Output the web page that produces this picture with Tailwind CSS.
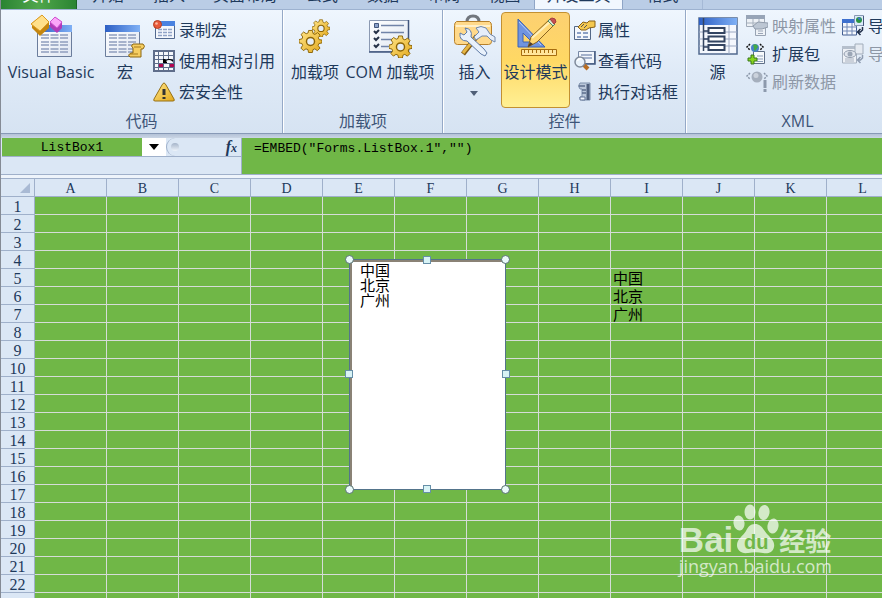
<!DOCTYPE html>
<html lang="zh-CN">
<head>
<meta charset="utf-8">
<meta name="viewport" content="width=device-width, initial-scale=1">
<title>ListBox1</title>
<script src="https://cdn.jsdelivr.net/npm/@tailwindcss/browser@4"></script>
</head>
<body class="flex h-screen flex-col overflow-hidden border-l border-[#858b95] bg-[#dbe7f5] font-['Open_Sans','Noto_Sans_CJK_SC',sans-serif] text-base text-[#1e395b]">

<svg width="0" height="0" class="absolute" aria-hidden="true">
  <defs>
    <linearGradient id="gold" x1="0" y1="0" x2="1" y2="1"><stop offset="0" stop-color="#ffe58a"/><stop offset="1" stop-color="#e3a91c"/></linearGradient>
    <linearGradient id="blue" x1="0" y1="0" x2="1" y2="0"><stop offset="0" stop-color="#2d5fc4"/><stop offset="1" stop-color="#7fb0f5"/></linearGradient>
    <linearGradient id="page" x1="0" y1="0" x2="1" y2="1"><stop offset="0" stop-color="#fff"/><stop offset="1" stop-color="#dfe6f2"/></linearGradient>
    <symbol id="gear" viewBox="0 0 24 24">
      <path d="M10 1h4l.6 3.2 2 .9 2.8-1.9 2.6 2.700-1.800 2.700.8 2L24 11v3l-3.200.7-.8 2 1.900 2.700-2.700 2.700-2.700-1.900-2 .9L14 24h-4l-.7-3-2-.8-2.700 1.800-2.600-2.600 1.800-2.800-.8-2L0 14v-3.500l3.100-.700.8-2L2.200 5.200l2.600-2.600 2.700 1.800 2-.8z" fill="url(#gold)" stroke="#8c6508"/>
      <circle cx="12" cy="12.500" r="4.200" fill="#e4edf8" stroke="#8c6508" stroke-width="1.500"/>
    </symbol>
    <symbol id="sheet" viewBox="0 0 35 32">
      <path d="M.5.5h34v31H.5z" fill="url(#page)" stroke="#6b7d9c"/>
      <path d="M0 0h35v7H0z" fill="url(#blue)"/>
      <path d="M4 10h27M4 13h27M4 17h27M4 20h27M4 24h27M4 27h27" stroke="#8f9dbd" stroke-width="1.500" stroke-dasharray="8 1.500"/>
    </symbol>
  </defs>
</svg>

<nav aria-label="功能区选项卡" class="flex h-[9px] shrink-0 items-end overflow-hidden bg-[#bacde6]">
  <a href="#" class="flex h-[9px] w-[76px] shrink-0 items-end justify-center border-r border-[#1b6527] bg-linear-to-r from-[#2a8432] via-[#4fa64b] to-[#2a8432] pb-1 leading-5 text-white">文件</a>
  <a href="#" class="w-[62px] shrink-0 pb-1 text-center leading-5">开始</a>
  <a href="#" class="w-[60px] shrink-0 pb-1 text-center leading-5">插入</a>
  <a href="#" class="w-[92px] shrink-0 pb-1 text-center leading-5">页面布局</a>
  <a href="#" class="w-[62px] shrink-0 pb-1 text-center leading-5">公式</a>
  <a href="#" class="w-[60px] shrink-0 pb-1 text-center leading-5">数据</a>
  <a href="#" class="w-[62px] shrink-0 pb-1 text-center leading-5">审阅</a>
  <a href="#" class="w-[59px] shrink-0 pb-1 text-center leading-5">视图</a>
  <a href="#" aria-current="page" class="flex h-[9px] w-[89px] shrink-0 items-end justify-center border-x border-[#8fa5c6] bg-[#f1f7fe] pb-1 leading-5">开发工具</a>
  <a href="#" class="flex h-[9px] w-[80px] shrink-0 items-end justify-center border-r border-[#a5b9d6] pb-1 leading-5">格式</a>
</nav>

<main class="flex min-h-0 flex-1 flex-col">
<div class="flex h-[125px] shrink-0 overflow-hidden border-t border-b border-t-[#9db2d0] border-b-[#8799b6] bg-linear-to-b from-[#eff6fe] via-[#dfeaf7] to-[#d6e3f2] whitespace-nowrap">

  <section class="flex w-[282px] shrink-0 flex-col border-r border-[#95a9c7]">
    <div class="flex flex-1 items-start gap-1 pt-1 pl-1">
      <button class="flex w-[92px] flex-col items-center">
        <svg width="44" height="46" viewBox="0 0 44 46"><use href="#sheet" x="8" y="11" width="35" height="32"/><path d="m13 1 7 7v6l-9 8-8-8V9z" fill="#c4860f"/><path d="M13 1 20 8l-9 9-9-7z" fill="#ffe08a" stroke="#dc9b20"/><path d="m26 3 7 5v6l-5 5-7-6V8z" fill="#b03cb8"/><path d="m26 3 7 5-5 6-7-6z" fill="#fba6f8" stroke="#d052d0"/></svg>
        <span class="leading-6">Visual Basic</span>
      </button>
      <button class="flex w-[48px] flex-col items-center">
        <svg width="40" height="46" viewBox="0 0 40 46"><use href="#sheet" x="0" y="11" width="35" height="32"/><path d="M28 30h10q3 2 0 5h-2v8H25q-3-2 1-4h2v-5q-3-2 0-4z" fill="#f6ce62" stroke="#8b6613"/><path d="M29 33h7M25 40h8" stroke="#a77b1b"/></svg>
        <span class="leading-6">宏</span>
      </button>
      <div class="flex flex-col">
        <button class="flex h-[31px] items-center gap-1"><svg width="22" height="22" viewBox="0 0 22 22"><path d="M2.500 2.500h19v17h-19z" fill="#f4f7fc" stroke="#52698f"/><path d="M2 2h20v5H2z" fill="#4a82e0"/><path d="M5 10.500h14M5 13.500h14M5 16.500h14" stroke="#91a3c7" stroke-dasharray="4 1" stroke-width="1.500"/><circle cx="4.500" cy="5.500" r="4" fill="#e8593a" stroke="#b33c20"/><circle cx="3.500" cy="4.500" r="1.300" fill="#ffb9a0"/></svg>录制宏</button>
        <button class="flex h-[31px] items-center gap-1"><svg width="22" height="22" viewBox="0 0 22 22"><path d="M0 0h22v22H0z" fill="#5f6d8a"/><path d="M2 2h3v3H2zM6 2h4v3H6zM11 2h4v3h-4zM16 2h4v3h-4zM2 6h3v3H2zM6 6h4v3H6zM11 6h4v3h-4zM16 6h4v3h-4zM2 10h3v3H2zM6 10h14v3H6zM2 14h3v3H2zM11 14h5v3h-5zM2 18h3v2H2zM6 18h4v2H6zM11 18h4v2h-4zM16 18h4v2h-4z" fill="#f5f7fb"/><path d="M6 14h4v3H6zM17 14h4v3h-4z" fill="#b20750"/><path d="M10 9v4h4v-1l-1-1q3-2 6 0l1 1v-2q-4-2-7 0l-1-1z"/></svg>使用相对引用</button>
        <button class="flex h-[31px] items-center gap-1"><svg width="22" height="22" viewBox="0 0 22 22"><path d="M11 2q1 0 2 2l8 14q1 2-1 2H2q-2 0-1-2L9 4q1-2 2-2z" fill="url(#gold)" stroke="#967015"/><path d="M9.500 8h3v6h-3zM9.500 16h3v2h-3z" fill="#333"/></svg>宏安全性</button>
      </div>
    </div>
    <h2 class="h-6 text-center leading-6 text-[#3e5578]">代码</h2>
  </section>

  <section class="flex w-[160px] shrink-0 flex-col border-r border-l border-l-white border-r-[#95a9c7]">
    <div class="flex flex-1 items-start pt-1 pl-1">
      <button class="flex w-[54px] flex-col items-center">
        <svg width="32" height="46" viewBox="0 0 32 46"><use href="#gear" x="13" y="5" width="18" height="18"/><use href="#gear" x="0" y="15" width="23" height="24"/></svg>
        <span class="leading-6">加载项</span>
      </button>
      <button class="flex w-[96px] flex-col items-center">
        <svg width="44" height="46" viewBox="0 0 44 46"><path d="M1.500 6.500h39v31h-39z" fill="url(#page)" stroke="#8b99b2"/><path d="M40.500 6v32H1" stroke="#40557d" stroke-width="1.500" fill="none"/><path d="M13 11.500h23M13 18.500h23M13 25.500h11M13 32.500h9" stroke="#7183a8" stroke-width="1.500"/><path d="M6.500 9.500h4v4h-4z" fill="#8da2ca" stroke="#44577b"/><path d="m6 17 2 2 3-3M6 24l2 2 3-3M6 31l2 2 3-3" fill="none" stroke="#263147" stroke-width="2"/><use href="#gear" x="21" y="21" width="23" height="23"/></svg>
        <span class="leading-6">COM 加载项</span>
      </button>
    </div>
    <h2 class="h-6 text-center leading-6 text-[#3e5578]">加载项</h2>
  </section>

  <section class="flex w-[243px] shrink-0 flex-col border-r border-l border-l-white border-r-[#95a9c7]">
    <div class="flex flex-1 items-start pl-1">
      <button class="flex w-[53px] flex-col items-center pt-1">
        <svg width="44" height="46" viewBox="0 0 44 46"><path d="M14 8q0-6 6-6t6 6" fill="none" stroke="#71767e" stroke-width="3"/><path d="M3.500 7.500h33q2 1 2 4v16q0 3-3 3h-31q-3 0-3-3v-16q0-3 2-4z" fill="#ffd98b" stroke="#b7802a"/><path d="M3 12h34" stroke="#fff0ca" stroke-width="2"/><path d="m24 22-14 18" stroke="#805914" stroke-width="5"/><path d="m24 22-14 17" stroke="#e6b644" stroke-width="3"/><path d="M23 14q5-3 10 0l4 6 5 3v5l-4-2-4-4-5 0-6 4-2-3 5-5z" fill="#e6eefa" stroke="#7088ac"/><path d="m12 14 2 4-3 3-4-2q-1 8 7 8l14 13 4 2 2-3-3-4-13-12q2-8-6-9z" fill="#e9f1fb" stroke="#5f7ba6"/></svg>
        <span class="leading-6">插入</span>
        <svg class="mt-1" width="9" height="10" viewBox="0 0 9 10"><path d="M0 3h8L4 8z" fill="#4f5f77"/></svg>
      </button>
      <button aria-pressed="true" class="mt-0.5 flex h-[96px] w-[69px] flex-col items-center rounded-sm border border-[#c29032] bg-linear-to-b from-[#fcd071] via-[#ffd864] to-[#fff093] pt-px">
        <svg width="44" height="46" viewBox="0 0 44 46"><path d="M4 5v28h27zm5 14v9h9z" fill="#7094df" fill-rule="evenodd" stroke="#3b62b5"/><path d="m5 8 22 23" stroke="#b6cdfa"/><path d="M7.500 35.500h35v6h-35z" fill="#ffe59b" stroke="#a66c0f"/><path d="M10.500 36v3M14.500 36v3M18.500 36v3M22.500 36v3M26.500 36v3M30.500 36v3M34.500 36v3M38.500 36v3" stroke="#a66c0f"/><path d="m14 33 3-10L36 5l5 5-18 18z" fill="#ffd875" stroke="#8a641e"/><path d="m18 24 19-17" stroke="#fff0b9" stroke-width="2"/><path d="m34 7 2-2 5 5-2 2z" fill="#d8e6cf" stroke="#4c8c67"/><path d="m36 5 2-1q4 0 4 4l-2 2z" fill="#c94f50" stroke="#a33e40"/><path d="m14 33 2-5 3 2z" fill="#493b31"/></svg>
        <span class="leading-6">设计模式</span>
      </button>
      <div class="flex flex-col pt-1 pl-1">
        <button class="flex h-[31px] items-center gap-0.5"><svg width="22" height="22" viewBox="0 0 22 22"><path d="M.500 7.500h16v13H.500z" fill="#f4f7fc" stroke="#536887"/><path d="M3 13h4v2H3zM3 17h4v2H3zM9 13h5v2H9zM9 17h5v2H9z" fill="#8ba0c6"/><path d="m4 8 5-5 4 1 2-2h6v6l-6 1-3 2H7z" fill="#f4c84e" stroke="#876018"/><path d="m7 8 3-3M10 9l3-3" stroke="#555"/></svg>属性</button>
        <button class="flex h-[31px] items-center gap-0.5"><svg width="22" height="22" viewBox="0 0 22 22"><path d="M4.500 1.500h16v12h-16z" fill="#f2f6fc" stroke="#7788a5"/><path d="M21 1v13H8" fill="none" stroke="#435a80" stroke-width="1.500"/><path d="M7 5h11M7 8h11" stroke="#899abb" stroke-width="1.500"/><path d="m10 15 4 4" stroke="#b86d22" stroke-width="4"/><circle cx="6" cy="12" r="5" fill="#e8f2fb" stroke="#808b9b" stroke-width="1.500"/><path d="M3.500 11q1-3 4-2" stroke="white" stroke-width="1.500" fill="none"/></svg>查看代码</button>
        <button class="flex h-[31px] items-center gap-0.5"><svg width="22" height="22" viewBox="0 0 22 22"><path d="M6 2h10v17H8q-3-1-2-3h2V8H6q-3-3 0-6z" fill="#b9c6d9" stroke="#7d8fac"/><path d="M14 3v16" stroke="#4d5e7c" stroke-width="3"/><path d="M5 5h6M8 9h4M8 12h4" stroke="#5d6f8d" stroke-width="1.500"/><path d="M6 16h5v3H6z" fill="#f3f7ff" stroke="#607394"/></svg>执行对话框</button>
      </div>
    </div>
    <h2 class="h-6 text-center leading-6 text-[#3e5578]">控件</h2>
  </section>

  <section class="flex w-[222px] shrink-0 flex-col border-l border-white">
    <div class="flex flex-1 items-start pl-1">
      <button class="flex w-[53px] flex-col items-center pt-1">
        <svg width="40" height="46" viewBox="0 0 40 46"><path d="M1 4h38v36H1z" fill="#f4f7fd" stroke="#51698f" stroke-width="1.500"/><path d="M1 4h38v7H1z" fill="url(#blue)"/><path d="M1 18h38M1 25h38M1 32h38M31 11v29" stroke="#9ba8c2"/><path d="M5.500 4v33M5.500 17h5M5.500 25h5M5.500 33h5" stroke="#334461" stroke-width="1.500"/><path d="M10.500 14h16v5h-16zM10.500 22.500h16v5h-16zM10.500 31h16v5h-16z" fill="#fff" stroke="#334461" stroke-width="2"/></svg>
        <span class="leading-6">源</span>
      </button>
      <div class="flex w-[98px] flex-col pt-0.5 pl-0.5">
        <button disabled class="flex h-[28px] items-center gap-1 text-[#8d97a6]"><svg width="22" height="22" viewBox="0 0 22 22"><path d="M.500.500h18v11h-18z" fill="#edf1f6" stroke="#a1abb9"/><path d="M0 0h19v4H0z" fill="#97a4b7"/><path d="M1 8h17M7 4v7M13 4v7" stroke="#a5afbc"/><path d="M9.500 11.500h10v9h-10z" fill="#eef2f7" stroke="#98a3b3"/><path d="M12 16h5M12 18.500h5" stroke="#9aa5b7"/><path d="m7 11 5-4 10 1v4l-6 2H9z" fill="#bcc6d3" stroke="#919cac"/></svg>映射属性</button>
        <button class="flex h-[28px] items-center gap-1"><svg width="22" height="22" viewBox="0 0 22 22"><path d="M7.500 8.500h11v12h-11z" fill="#f7fafc" stroke="#5f6f87"/><path d="M11 13h6M11 16h6M11 18.500h6" stroke="#8d9fb9"/><circle cx="9" cy="5" r="4" fill="#4a82c9"/><path d="M7 2q4-2 5 2l-3 4q-2-1-1-3z" fill="#45aa48"/><path d="M4 1 1 4l3 3M14 1l3 3-3 3" fill="none" stroke="#111" stroke-width="1.500" stroke-dasharray="2 1"/><path d="M5 12h3v3h3v3H8v3H5v-3H2v-3h3z" fill="#87d41f" stroke="#38791a"/></svg>扩展包</button>
        <button disabled class="flex h-[28px] items-center gap-1 text-[#8d97a6]"><svg width="22" height="22" viewBox="0 0 22 22"><circle cx="11" cy="6" r="5.500" fill="#a5afbd"/><circle cx="10" cy="4.500" r="2.500" fill="#cbd2dc"/><path d="M4 2 1 5l3 3M18 2l3 3-3 3" fill="none" stroke="#8996a8" stroke-width="1.500" stroke-dasharray="2 1"/><path d="M19 9v8M19 18v3" stroke="#8d9aad" stroke-width="3"/></svg>刷新数据</button>
      </div>
      <div class="flex flex-col pt-0.5">
        <button class="flex h-[28px] items-center gap-1"><svg width="22" height="22" viewBox="0 0 22 22"><path d="M.500 5h14v15H.500z" fill="#f5f8fd" stroke="#415d91"/><path d="M0 4h15v4H0z" fill="#3d70cf"/><path d="M0 12h15M0 16h15M5 8v12M10 8v12" stroke="#7188b5"/><path d="M12.500.500h9v10h-9z" fill="#dbe9f9" stroke="#8899b4"/><path d="M21.500 1v10" stroke="#46597d"/><circle cx="17" cy="5" r="3" fill="#299440"/><path d="M16 4q2-2 2 1" stroke="#3d70cf" stroke-width="1.500" fill="none"/><path d="M20.500 12v3l-2 2h-2m2-3-3 3 3 3" stroke="#1f2e49" fill="none" stroke-width="1.500"/></svg>导入</button>
        <button disabled class="flex h-[28px] items-center gap-1 text-[#8d97a6]"><svg width="22" height="22" viewBox="0 0 22 22"><path d="M.500 4h14v16H.500z" fill="#eef1f6" stroke="#a6b0be"/><path d="M0 3h15v3H0z" fill="#b5bfcc"/><path d="M3 16h9M3 18h9" stroke="#a8b1bf"/><path d="M13 1h8v10h-8z" fill="#e5eaf1" stroke="#a2adbb"/><ellipse cx="8" cy="11" rx="6" ry="3.500" fill="#e0e5ed" stroke="#929dad"/><circle cx="8" cy="11" r="2.500" fill="#9ba6b6"/><path d="M20.500 12v3l-2 2h-2m2-3-3 3 3 3" stroke="#8f9cb0" fill="none" stroke-width="1.500"/></svg>导出</button>
      </div>
    </div>
    <h2 class="h-6 text-center leading-6 text-[#3e5578]">XML</h2>
  </section>
</div>

<div class="h-1 shrink-0 bg-linear-to-b from-[#b4c2d7] to-[#cad5e5]"></div>

<div class="flex h-[37px] shrink-0 border-b border-[#9fb0ca] pl-px">
  <div class="flex w-[240px] shrink-0 flex-col border-r border-[#9fb0ca]">
    <div class="flex h-[19px] border-b border-[#9fb0ca]">
      <input aria-label="名称框" value="ListBox1" class="w-[140px] bg-[#70b747] pt-0.5 text-center font-['Liberation_Mono',monospace] text-[13px] text-black outline-none">
      <button aria-label="展开名称框" class="flex w-6 items-center justify-center bg-white"><svg width="10" height="6" viewBox="0 0 10 6"><path d="M0 0h10L5 6z"/></svg></button>
      <div class="flex flex-1 items-center justify-between rounded-l-full border-l border-[#9fb0ca] pr-1 pl-1">
        <span class="size-2 rounded-full bg-linear-to-b from-[#a5b4c9] to-[#eef4fb]"></span>
        <button aria-label="插入函数" class="font-['Liberation_Serif',serif] text-base leading-4 font-bold italic">f<span class="text-xs">x</span></button>
      </div>
    </div>
  </div>
  <textarea aria-label="编辑栏" rows="1" spellcheck="false" class="min-w-0 flex-1 resize-none overflow-hidden bg-[#70b747] pt-0.5 pl-3 font-['Liberation_Mono',monospace] text-[13px] leading-[18px] text-black outline-none">=EMBED("Forms.ListBox.1","")</textarea>
</div>

<div class="h-1 shrink-0 border-b border-[#9fb0ca] bg-[#eef4fb]"></div>

<div class="relative min-h-0 flex-1 overflow-hidden bg-[#70b747]">
  <table class="w-max table-fixed border-separate border-spacing-0">
    <thead><tr id="columns" class="h-[18px]">
      <th class="w-[34px] border-r border-b border-[#9fb0ca] bg-[#dbe7f5] p-0"><svg class="ml-auto mr-1" width="10" height="10" viewBox="0 0 10 10" role="img" aria-label="全选"><path d="M10 0v10H0z" fill="#a9bad4"/></svg></th>
    </tr></thead>
    <tbody id="rows"></tbody>
  </table>

  <div class="absolute top-20 left-[348px] h-[231px] w-[157px] border border-[#54748b]">
    <select aria-label="ListBox1" size="15" class="block size-full appearance-none overflow-hidden border-t-2 border-l-2 border-[#8a8275] bg-white p-0 pl-2 font-['Noto_Sans_CJK_SC',sans-serif] text-[15px] text-black outline-none">
      <option class="flex h-[15px] min-h-0 items-center p-0">中国</option><option class="flex h-[15px] min-h-0 items-center p-0">北京</option><option class="flex h-[15px] min-h-0 items-center p-0">广州</option>
    </select>
    <span class="absolute -top-[5px] -left-[5px] size-[9px] rounded-full border border-[#56706f] bg-[#e9fafa]"></span>
    <span class="absolute -top-[5px] -right-[5px] size-[9px] rounded-full border border-[#56706f] bg-[#e9fafa]"></span>
    <span class="absolute -bottom-[5px] -left-[5px] size-[9px] rounded-full border border-[#56706f] bg-[#e9fafa]"></span>
    <span class="absolute -right-[5px] -bottom-[5px] size-[9px] rounded-full border border-[#56706f] bg-[#e9fafa]"></span>
    <span class="absolute -top-1 left-[73px] size-2 border border-[#668fa8] bg-[#d8f3f5]"></span>
    <span class="absolute -bottom-1 left-[73px] size-2 border border-[#668fa8] bg-[#d8f3f5]"></span>
    <span class="absolute top-[110px] -left-[5px] size-2 border border-[#668fa8] bg-[#d8f3f5]"></span>
    <span class="absolute top-[110px] -right-[5px] size-2 border border-[#668fa8] bg-[#d8f3f5]"></span>
  </div>

  <div class="absolute right-[50px] bottom-5 flex flex-col text-white/70">
    <div class="flex h-[50px] items-end">
      <span class="font-['Liberation_Sans',sans-serif] text-[35px] leading-7 font-bold">Bai</span>
      <span class="relative block h-[50px] w-[46px]">
        <svg width="46" height="50" viewBox="0 0 46 50" fill="currentColor"><ellipse cx="6" cy="19" rx="5.500" ry="7.500" transform="rotate(-8 6 19)"/><ellipse cx="17" cy="8" rx="5.500" ry="7.500"/><ellipse cx="31" cy="8.500" rx="5.500" ry="7.500" transform="rotate(10 31 8.500)"/><ellipse cx="40" cy="22" rx="5.500" ry="7.500" transform="rotate(10 40 22)"/><path d="M22 20c6 0 8 5 12 10 5 5 8 8 7 13-1 6-7 7-11 6-5-1-10-1-15 0-7 1-11-3-11-8 0-6 6-9 9-14 2-4 4-7 9-7z"/></svg>
        <span class="absolute inset-x-0 bottom-0 text-center font-['Liberation_Sans',sans-serif] text-[20px] leading-6 font-bold text-[#70b747]">du</span>
      </span>
      <span class="font-['Noto_Sans_CJK_SC',sans-serif] text-[26px] leading-7 font-bold">经验</span>
    </div>
    <span class="font-['Open_Sans',sans-serif] text-[18px] leading-6">jingyan.baidu.com</span>
  </div>
</div>
</main>

<script>
  const values = { I5: '中国', I6: '北京', I7: '广州' };
  const columns = document.getElementById('columns');
  const rows = document.getElementById('rows');
  const letters = 'ABCDEFGHIJKLMNOPQRSTUVWXYZ'.slice(0, Math.ceil((innerWidth - 35) / 72));
  for (const letter of letters) {
    columns.insertAdjacentHTML('beforeend', `<th scope="col" class="h-[18px] w-[72px] border-r border-b border-[#9fb0ca] bg-[#dbe7f5] p-0 pt-0.5 font-['Liberation_Serif',serif] text-[14px] leading-[15px] font-normal">${letter}</th>`);
  }
  // The last row is only partly in view, so it has no number.
  const fullRows = Math.floor((innerHeight - 197) / 18);
  for (let row = 1; row <= fullRows + 1; row++) {
    const cells = [...letters].map(letter => `<td class="h-[18px] border-r border-b border-[#d5dcd8] p-0 pl-0.5 font-['Noto_Sans_CJK_SC',sans-serif] text-[15px] leading-4 text-black">${values[letter + row] || ''}</td>`).join('');
    rows.insertAdjacentHTML('beforeend', `<tr><th scope="row" class="h-[18px] border-r border-b border-[#9fb0ca] bg-[#dbe7f5] p-0 pt-0.5 font-['Liberation_Serif',serif] text-base leading-[15px] font-normal">${row <= fullRows ? row : ''}</th>${cells}</tr>`);
  }
</script>
</body>
</html>
